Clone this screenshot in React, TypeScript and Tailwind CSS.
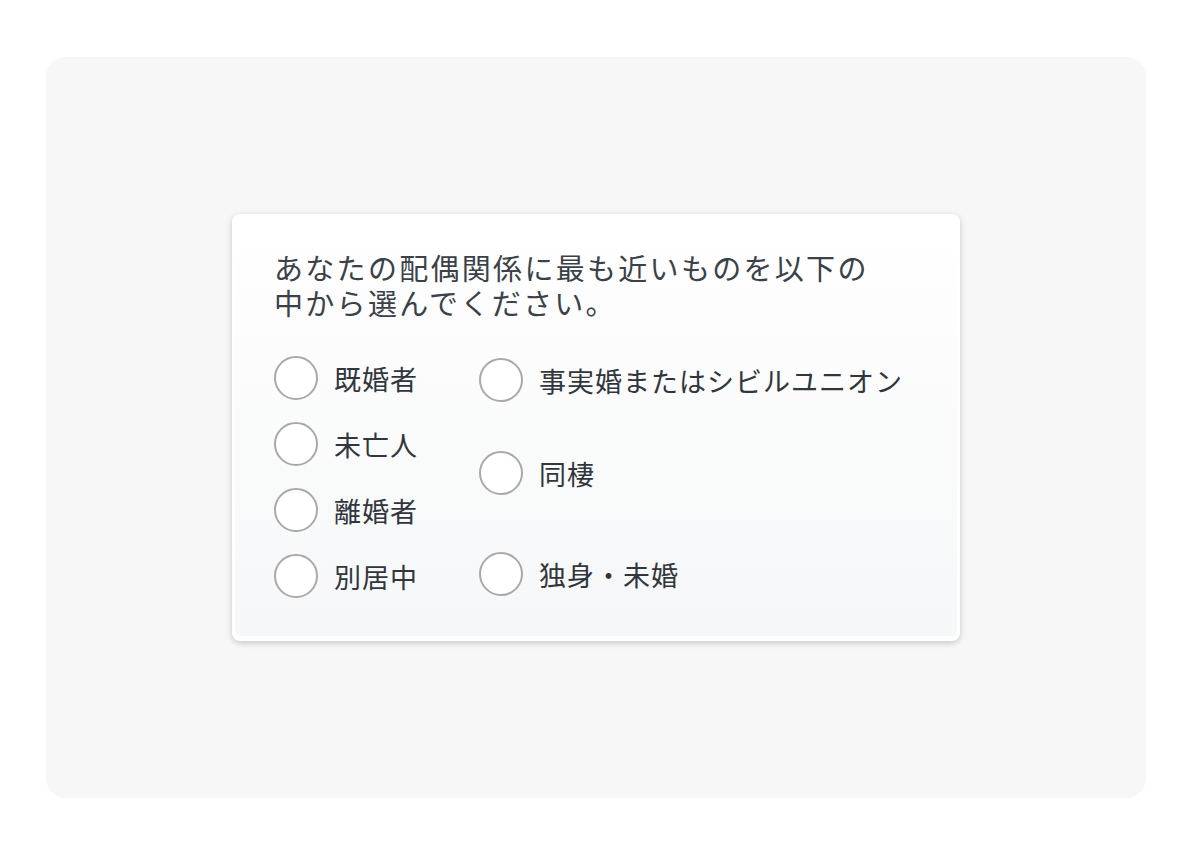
const left = ["既婚者", "未亡人", "離婚者", "別居中"];
const right = ["事実婚またはシビルユニオン", "同棲", "独身・未婚"];

function Radio({ label, className = "" }: { label: string; className?: string }) {
  return (
    <label className={`flex items-center gap-4 ${className}`}>
      <span className="h-[44px] w-[44px] shrink-0 rounded-full border-2 border-[#a9a9a9] bg-white" />
      <span className="whitespace-nowrap text-[27px] leading-none tracking-[1px] text-[#30363c]">{label}</span>
    </label>
  );
}

export default function App() {
  return (
    <div
      className="flex h-[856px] w-[1192px] bg-white pl-[46px] pt-[57px]"
      style={{ fontFamily: '"Noto Sans CJK JP", "Noto Sans", sans-serif' }}
    >
      <div className="flex h-[741px] w-[1100px] items-center justify-center rounded-[20px] bg-[#f7f7f7]">
        <div className="h-[427px] w-[728px] rounded-lg bg-white p-[3px] pb-[5px] shadow-[0_2px_6px_rgba(0,0,0,0.2)]">
          <div className="h-full rounded-md bg-gradient-to-b from-white to-[#f6f7f8] pl-[39px] pt-[33px]">
            <h1 className="text-[29px] font-normal leading-[35px] tracking-[2.3px] text-[#3a4148]">
              <span className="block">あなたの配偶関係に最も近いものを以下の</span>
              <span className="block">中から選んでください。</span>
            </h1>
            <div className="mt-[36px] grid grid-cols-[205px_1fr]">
              <div className="flex flex-col gap-[22px]">
                {left.map((l) => (
                  <Radio key={l} label={l} />
                ))}
              </div>
              <div className="flex flex-col pt-[2px]">
                <Radio label={right[0]} />
                <Radio label={right[1]} className="mt-[49px]" />
                <Radio label={right[2]} className="mt-[57px]" />
              </div>
            </div>
          </div>
        </div>
      </div>
    </div>
  );
}
